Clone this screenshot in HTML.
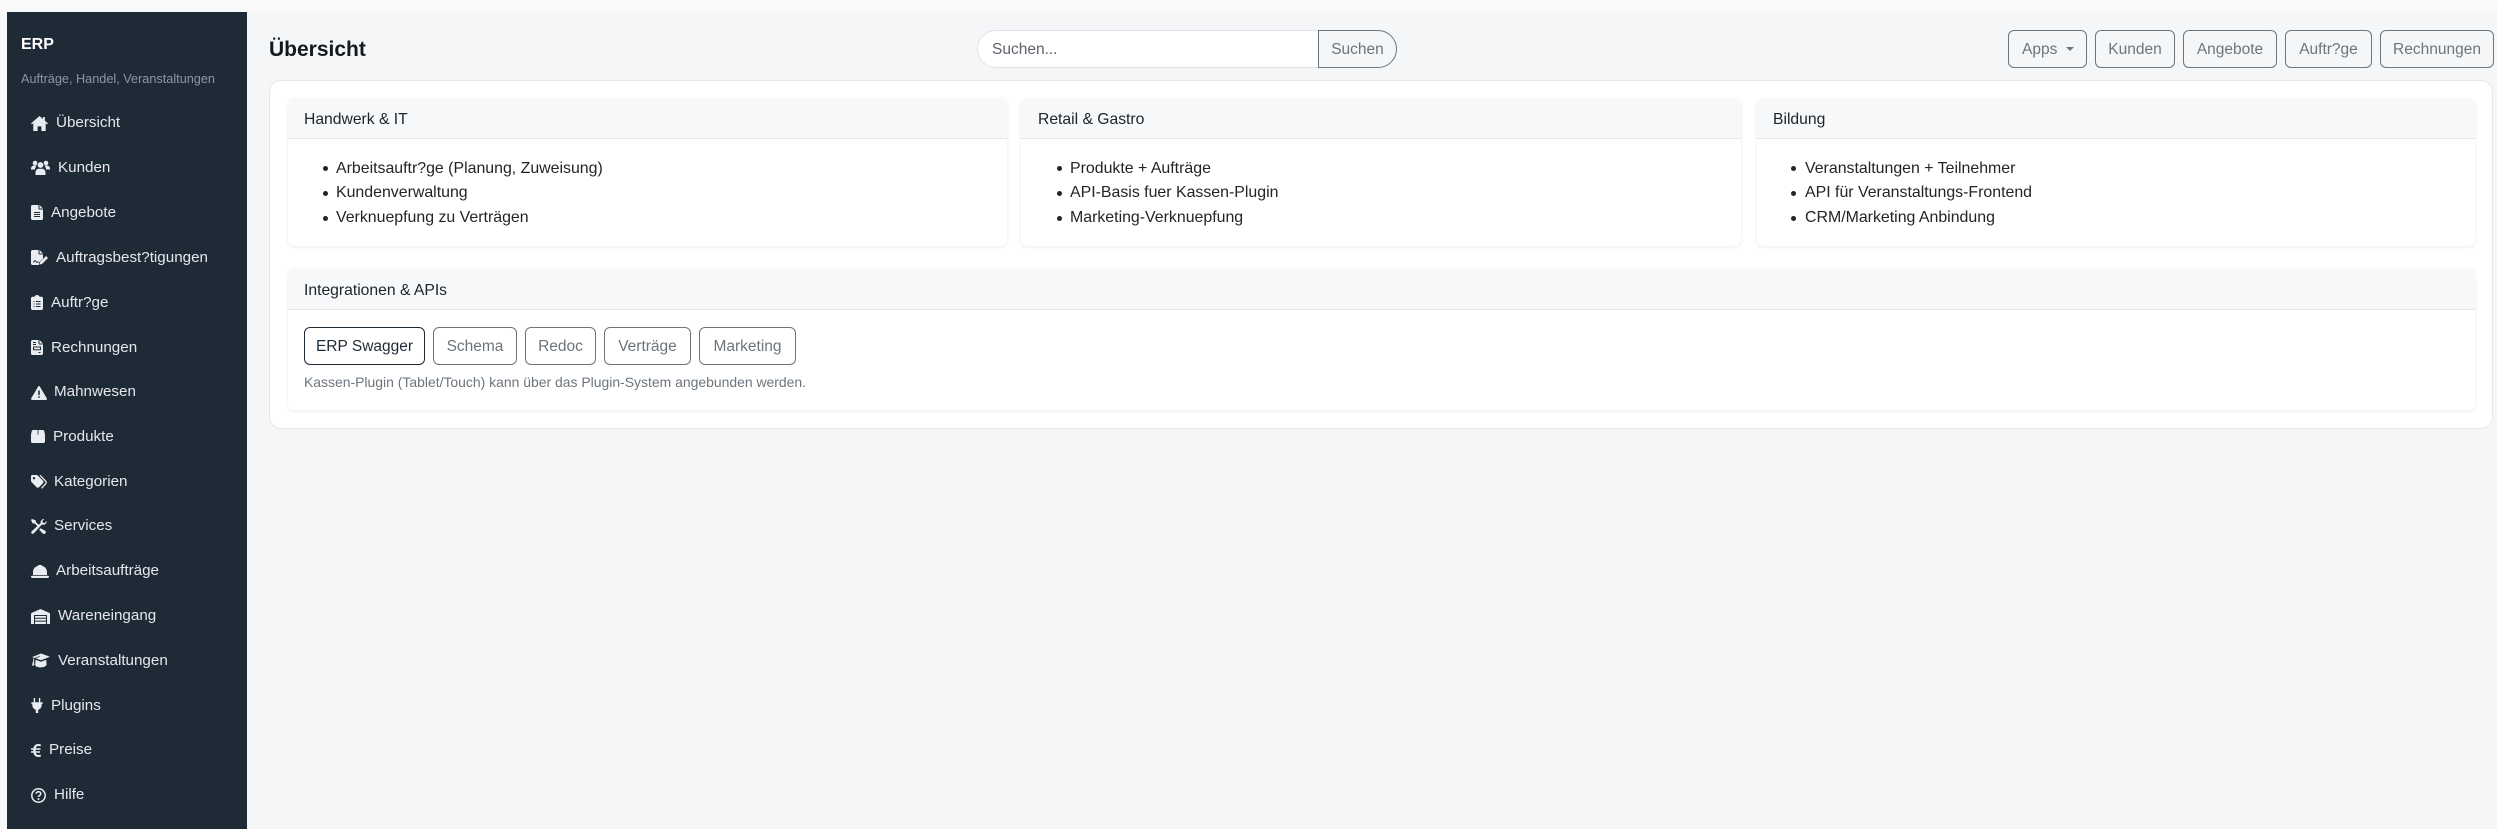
<!DOCTYPE html>
<html lang="de"><head><meta charset="utf-8"><title>ERP Übersicht</title>
<style>
*{box-sizing:border-box}
html,body{margin:0;padding:0;width:2497px;height:829px;overflow:hidden;background:#f8f9fa;font-family:"Liberation Sans",sans-serif}
.a{position:absolute;white-space:nowrap}
#side{position:absolute;left:7px;top:12px;width:240px;height:817px;background:#1f2a37}
#main{position:absolute;left:247px;top:12px;width:2250px;height:817px;background:#f4f6f8}
.n{position:absolute;white-space:nowrap;font-size:15.2px;line-height:22px;color:#e5e7eb}
svg.i{position:absolute;fill:#e9edf2;overflow:visible}
.panel{position:absolute;left:269px;top:80px;width:2224px;height:349px;background:#fff;border:1px solid #e6e8ec;border-radius:12px}
.card{position:absolute;background:#fff;border-radius:6px;box-shadow:0 1px 3px rgba(0,0,0,.09)}
.hd{position:absolute;left:0;top:0;right:0;height:41px;background:#f7f8f9;border-bottom:1px solid #e3e5e8;border-radius:6px 6px 0 0}
.t{position:absolute;white-space:nowrap;font-size:15.7px;line-height:22px;color:#212529}
.l{font-size:15.9px}
.b{position:absolute;height:38px;border:1px solid #6c757d;border-radius:6px;color:#6c757d;font-size:15.5px;line-height:38px;text-align:center;white-space:nowrap;background:transparent}
.dot{position:absolute;width:5px;height:5px;border-radius:50%;background:#212529}
</style></head><body>
<div id="main"></div>
<div id="side"></div>

<div class="a" style="left:21px;top:34px;font-size:16px;line-height:22px;font-weight:700;color:#fff">ERP</div>
<div class="a" style="left:21px;top:69px;font-size:12.7px;line-height:20px;color:#8b97a5">Aufträge, Handel, Veranstaltungen</div>

<svg class="i" style="left:31px;top:116px" width="17" height="15" viewBox="0 0 17 15"><path d="M8.500 0L0 7.400l.9 1L2.300 7.300V15h4.300v-4.600h3.800V15h4.300V7.300l1.400 1.100.9-1L13.900 4.700V1h-2v2L8.500 0z"/></svg>
<div class="n" style="left:56px;top:112px">Übersicht</div>
<svg class="i" style="left:31px;top:160px" width="19" height="15" viewBox="0 0 19 15"><circle cx="4" cy="3" r="2.300"/><circle cx="15" cy="3" r="2.300"/><circle cx="9.500" cy="5" r="2.900"/><path d="M0 9c0-2.500 1.500-3.500 3-3.500h2l.5.500C4.500 7 4 8 4 9.500H0zM19 9c0-2.500-1.500-3.500-3-3.500h-2l-.5.500c1 1 1.500 2 1.500 3.500h4zM4.500 15v-2.500c0-2.500 1.800-3.800 3.300-3.800h3.400c1.500 0 3.300 1.300 3.300 3.800V15z"/></svg>
<div class="n" style="left:58px;top:157px">Kunden</div>
<svg class="i" style="left:31px;top:205px" width="12" height="15" viewBox="0 0 12 15"><path d="M1.500 0H7.500v3.500c0 .6.400 1 1 1H12V13.500c0 .8-.7 1.500-1.500 1.500h-9C.7 15 0 14.300 0 13.500v-12C0 .7.700 0 1.500 0zM8.500 0L12 3.500H8.500z"/><path d="M3 7.500h6M3 9.500h6M3 11.500h6" stroke="#1f2a37" stroke-width="1" fill="none"/></svg>
<div class="n" style="left:51px;top:202px">Angebote</div>
<svg class="i" style="left:31px;top:250px" width="17" height="15" viewBox="0 0 17 15"><path d="M1.500 0H7.500v3.500c0 .6.400 1 1 1H12V8.500L8 12.500V15H1.500C.7 15 0 14.300 0 13.500v-12C0 .7.700 0 1.500 0zM8.500 0L12 3.500H8.500z"/><path d="M9 12l6-6 2 2-6 6-2.500.5z"/><path d="M2.500 12.500c1-2 1.500-2.500 2.500-1s1.500 1 2.500 0" stroke="#1f2a37" stroke-width="1" fill="none"/></svg>
<div class="n" style="left:56px;top:247px">Auftragsbest?tigungen</div>
<svg class="i" style="left:31px;top:295px" width="12" height="15" viewBox="0 0 12 15"><path d="M1.500 1.800H3.500C3.800.7 4.800 0 6 0s2.200.7 2.500 1.800h2c.8 0 1.500.7 1.500 1.500v10.200c0 .8-.7 1.500-1.500 1.500h-9C.7 15 0 14.300 0 13.500V3.300c0-.8.700-1.500 1.500-1.500z"/><path d="M2.500 6.500h1M5 6.500h4.500M2.500 9h1M5 9h4.500M2.500 11.500h1M5 11.500h4.500" stroke="#1f2a37" stroke-width="1" fill="none"/></svg>
<div class="n" style="left:51px;top:292px">Auftr?ge</div>
<svg class="i" style="left:31px;top:340px" width="12" height="15" viewBox="0 0 12 15"><path d="M1.500 0H7.500v3.500c0 .6.400 1 1 1H12V13.500c0 .8-.7 1.500-1.500 1.500h-9C.7 15 0 14.300 0 13.500v-12C0 .7.700 0 1.500 0zM8.500 0L12 3.500H8.500z"/><path d="M2 2.500h3M2 4.500h3M2.500 7h7v2.800h-7zM7.500 12.500h2" stroke="#1f2a37" stroke-width="1" fill="none"/></svg>
<div class="n" style="left:51px;top:337px">Rechnungen</div>
<svg class="i" style="left:31px;top:386px" width="16" height="14" viewBox="0 0 16 14"><path d="M8 0c.4 0 .7.200.9.600l6.900 11.800c.4.700-.1 1.600-.9 1.600H1.100C.300 14-.2 13.100.2 12.400L7.100.6C7.300.2 7.600 0 8 0z"/><path d="M8 4.500v4.500M8 10.300v1.500" stroke="#1f2a37" stroke-width="1.500" fill="none"/></svg>
<div class="n" style="left:54px;top:381px">Mahnwesen</div>
<svg class="i" style="left:31px;top:430px" width="14" height="13" viewBox="0 0 14 13"><path d="M2 0H12c.5 0 1 .4 1.200 1L14 4.500V11.500c0 .8-.7 1.500-1.500 1.500h-11C.7 13 0 12.300 0 11.500V4.500L.8 1C1 .4 1.500 0 2 0z"/><path d="M7 0v4.500" stroke="#1f2a37" stroke-width=".8" fill="none"/></svg>
<div class="n" style="left:53px;top:426px">Produkte</div>
<svg class="i" style="left:31px;top:475px" width="16" height="14" viewBox="0 0 16 14"><path d="M0 1.200C0 .5.500 0 1.200 0H5.500c.5 0 .9.200 1.200.5L12 5.800c.7.700.7 1.700 0 2.400L8 12.200c-.7.700-1.700.7-2.400 0L.5 7C.2 6.700 0 6.300 0 5.800zM3 2a1.200 1.200 0 100 2.400A1.200 1.200 0 003 2z"/><path d="M9 .3l5.500 5.700c.9.900.9 2.100 0 3L10.500 13.300" stroke="#e9edf2" stroke-width="1.300" fill="none"/></svg>
<div class="n" style="left:54px;top:471px">Kategorien</div>
<svg class="i" style="left:31px;top:519px" width="16" height="15" viewBox="0 0 16 15"><path d="M1 0L0 1l1.500 3.300 2.300.3 3.700 3.400 1.200-1.200L5 3.300 4.600 1.200zM13 0a3.400 3.400 0 00-3.400 4.100L.9 12.100c-.9.800-.9 1.700-.3 2.300.7.700 1.500.6 2.300-.2l8-8.700A3.400 3.400 0 0015.600 2l-2 2-1.800-.4-.4-1.800 2-1.700c-.1 0-.3-.1-.4-.1zM9.600 9.200l-1.400 1.500 3.300 3.600c.7.700 1.700.9 2.700.2.900-.8.800-1.900.1-2.600z"/></svg>
<div class="n" style="left:54px;top:515px">Services</div>
<svg class="i" style="left:31px;top:565px" width="18" height="13" viewBox="0 0 18 13"><path d="M7.500 0h3c.3 0 .5.200.5.500V1C14 1.600 16 4 16 7v3H2V7C2 4 4 1.600 7 1V.5c0-.3.200-.5.500-.5zM.8 10.800H17.200c.5 0 .8.400.8.800 0 .8-.7 1.400-1.500 1.400h-15C.7 13 0 12.400 0 11.600c0-.4.300-.8.800-.8z"/></svg>
<div class="n" style="left:56px;top:560px">Arbeitsaufträge</div>
<svg class="i" style="left:31px;top:609px" width="19" height="15" viewBox="0 0 19 15"><path d="M0 5.200C0 4.600.3 4.100.9 3.800L9 .3c.3-.1.700-.1 1 0l8.100 3.500c.6.300.9.800.9 1.400V15h-3V6H3v9H0z"/><path d="M4 7h11v1.800H4zM4 9.800h11v1.800H4zM4 12.600h11V15H4z"/></svg>
<div class="n" style="left:58px;top:605px">Wareneingang</div>
<svg class="i" style="left:31px;top:653px" width="19" height="15" viewBox="0 0 19 15"><path d="M10 .5L19 3.800 10 7.200 4.700 5.200 8.800 3.700l-.4-.6L3.400 5 1 4.100 10 .5z"/><path d="M4.500 6.700l5.500 2 5.200-2 .4 4.700c0 1.500-2.600 3-5.600 3s-5.800-1-5.800-2.500zM2.400 5.400l.8.300-.2 3.500.5 3-2.500.5.700-3.500.3-.5z"/></svg>
<div class="n" style="left:58px;top:650px">Veranstaltungen</div>
<svg class="i" style="left:31px;top:698px" width="12" height="15" viewBox="0 0 12 16"><path d="M2.500 0h1.500v4.500H2.500zM8 0h1.500v4.500H8zM0 4.500h12v1.700h-1v1.300c0 2.600-1.700 4.500-3.700 5V16h-2.600v-3.500C2.700 12 1 10.100 1 7.500V6.200H0z"/></svg>
<div class="n" style="left:51px;top:695px">Plugins</div>
<svg class="i" style="left:31px;top:744px" width="10" height="13" viewBox="0 0 10 13"><path d="M10 .5C9.100.2 8.200 0 7.300 0 4.700 0 3 1.600 2.400 4.200H0v1.500h2.200v1.600H0v1.500h2.400C3 11.400 4.700 13 7.300 13c.9 0 1.800-.2 2.700-.5l-.4-1.900c-.7.200-1.400.4-2.200.4-1.400 0-2.300-.9-2.700-2.200H9V7.300H4.600V5.700H9.500V4.200H4.700C5.100 2.900 6 2 7.400 2c.8 0 1.500.2 2.200.4z"/></svg>
<div class="n" style="left:49px;top:739px">Preise</div>
<svg class="i" style="left:31px;top:788px" width="15" height="15" viewBox="0 0 15 15"><circle cx="7.500" cy="7.500" r="6.700" fill="none" stroke="#e9edf2" stroke-width="1.500"/><path d="M5.200 5.800c0-1.300 1-2.100 2.300-2.100s2.300.8 2.300 2c0 1.700-2.300 1.700-2.300 3.300" fill="none" stroke="#e9edf2" stroke-width="1.500"/><circle cx="7.500" cy="11" r="1"/></svg>
<div class="n" style="left:54px;top:784px">Hilfe</div>

<div class="a" style="left:269px;top:37px;font-size:21px;line-height:26px;font-weight:700;color:#14191f">Übersicht</div>

<div class="a" style="left:977px;top:30px;width:342px;height:38px;background:#fff;border:1px solid #dfe2e6;border-radius:19px 0 0 19px"></div>
<div class="a" style="left:992px;top:39px;font-size:15.5px;line-height:22px;color:#5c636a">Suchen...</div>
<div class="b" style="left:1318px;top:30px;width:79px;border-radius:0 19px 19px 0">Suchen</div>

<div class="b" style="left:2008px;top:30px;width:79px;text-align:left;padding-left:13px">Apps<span style="position:absolute;left:57px;top:16px;width:0;height:0;border:4px solid transparent;border-top-color:#6c757d;border-bottom:0"></span></div>
<div class="b" style="left:2095px;top:30px;width:80px">Kunden</div>
<div class="b" style="left:2183px;top:30px;width:94px">Angebote</div>
<div class="b" style="left:2285px;top:30px;width:87px">Auftr?ge</div>
<div class="b" style="left:2380px;top:30px;width:114px">Rechnungen</div>

<div class="panel"></div>

<div class="card" style="left:288px;top:98px;width:719px;height:148px"><div class="hd"></div></div>
<div class="t" style="left:304px;top:109px">Handwerk &amp; IT</div>
<div class="dot" style="left:323px;top:166px"></div><div class="t l" style="left:336px;top:158px">Arbeitsauftr?ge (Planung, Zuweisung)</div>
<div class="dot" style="left:323px;top:191px"></div><div class="t l" style="left:336px;top:182px">Kundenverwaltung</div>
<div class="dot" style="left:323px;top:216px"></div><div class="t l" style="left:336px;top:207px">Verknuepfung zu Verträgen</div>

<div class="card" style="left:1021px;top:98px;width:720px;height:148px"><div class="hd"></div></div>
<div class="t" style="left:1038px;top:109px">Retail &amp; Gastro</div>
<div class="dot" style="left:1057px;top:166px"></div><div class="t l" style="left:1070px;top:158px">Produkte + Aufträge</div>
<div class="dot" style="left:1057px;top:191px"></div><div class="t l" style="left:1070px;top:182px">API-Basis fuer Kassen-Plugin</div>
<div class="dot" style="left:1057px;top:216px"></div><div class="t l" style="left:1070px;top:207px">Marketing-Verknuepfung</div>

<div class="card" style="left:1757px;top:98px;width:718px;height:148px"><div class="hd"></div></div>
<div class="t" style="left:1773px;top:109px">Bildung</div>
<div class="dot" style="left:1791px;top:166px"></div><div class="t l" style="left:1805px;top:158px">Veranstaltungen + Teilnehmer</div>
<div class="dot" style="left:1791px;top:191px"></div><div class="t l" style="left:1805px;top:182px">API für Veranstaltungs-Frontend</div>
<div class="dot" style="left:1791px;top:216px"></div><div class="t l" style="left:1805px;top:207px">CRM/Marketing Anbindung</div>

<div class="card" style="left:288px;top:269px;width:2187px;height:141px"><div class="hd"></div></div>
<div class="t" style="left:304px;top:280px">Integrationen &amp; APIs</div>
<div class="b" style="left:304px;top:327px;width:121px;border-color:#1f2a37;color:#1f2a37">ERP Swagger</div>
<div class="b" style="left:433px;top:327px;width:84px">Schema</div>
<div class="b" style="left:525px;top:327px;width:71px">Redoc</div>
<div class="b" style="left:604px;top:327px;width:87px">Verträge</div>
<div class="b" style="left:699px;top:327px;width:97px">Marketing</div>
<div class="a" style="left:304px;top:372px;font-size:13.95px;line-height:20px;color:#6c757d">Kassen-Plugin (Tablet/Touch) kann über das Plugin-System angebunden werden.</div>
</body></html>
